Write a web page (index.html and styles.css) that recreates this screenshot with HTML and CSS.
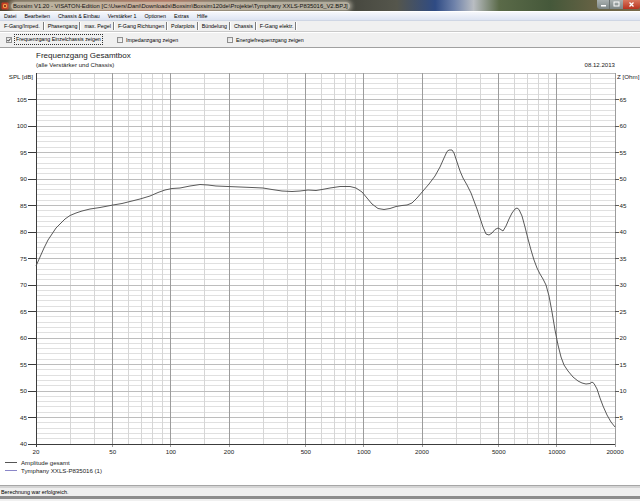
FILE: index.html
```html
<!DOCTYPE html>
<html lang="de">
<head>
<meta charset="utf-8">
<title>Boxsim</title>
<link rel="stylesheet" href="styles.css">
</head>
<body>
<div class="window">
  <div class="titlebar">
    <svg class="appicon" width="8" height="8" viewBox="0 0 8 8"><rect x="0.5" y="0.5" width="7" height="7" rx="1" fill="#c23a22"/><circle cx="4" cy="4" r="2.2" fill="#f2a24a"/><circle cx="4" cy="4" r="1" fill="#6a1a10"/></svg>
    <span class="title">Boxsim V1.20 - VISATON-Edition [C:\Users\Dani\Downloads\Boxsim\Boxsim120de\Projekte\Tymphany XXLS-P835016_V2.BPJ]</span>
    <div class="winbtns">
      <span class="wb wb-min"><svg width="13" height="9" viewBox="0 0 13 9"><rect x="4" y="5" width="5" height="1.5" fill="#fff"/></svg></span>
      <span class="wb wb-max"><svg width="13" height="9" viewBox="0 0 13 9"><rect x="4" y="2" width="5" height="4" fill="none" stroke="#fff" stroke-width="1"/></svg></span>
      <span class="wb wb-close"><svg width="17" height="9" viewBox="0 0 17 9"><path d="M6.5 2.5L10.5 6.5M10.5 2.5L6.5 6.5" stroke="#fff" stroke-width="1.3"/></svg></span>
    </div>
  </div>
  <div class="menubar">
    <span>Datei</span><span>Bearbeiten</span><span>Chassis &amp; Einbau</span><span>Verstärker 1</span><span>Optionen</span><span>Extras</span><span>Hilfe</span>
  </div>
  <div class="tabs">
    <span class="tab active">F-Gang/Imped.</span><span class="tab">Phasengang</span><span class="tab">max. Pegel</span><span class="tab">F-Gang Richtungen</span><span class="tab">Polarplots</span><span class="tab">Bündelung</span><span class="tab">Chassis</span><span class="tab">F-Gang elektr.</span>
  </div>
  <div class="checks">
    <label class="check c1"><span class="cb"><svg width="4" height="4" viewBox="0 0 4 4"><path d="M0.4 2L1.5 3.2L3.6 0.6" fill="none" stroke="#1a1a1a" stroke-width="0.9"/></svg></span><span class="focus">Frequenzgang Einzelchassis zeigen</span></label>
    <label class="check c2"><span class="cb"></span><span>Impedanzgang zeigen</span></label>
    <label class="check c3"><span class="cb"></span><span>Energiefrequenzgang zeigen</span></label>
  </div>
  <div class="chart">
    <div class="chart-head">
      <div class="chart-title">Frequenzgang Gesamtbox</div>
      <div class="chart-sub"><span>(alle Verstärker und Chassis)</span><span>08.12.2013</span></div>
    </div>
    <svg class="plot" width="640" height="388" viewBox="0 72 640 388">
      <g shape-rendering="crispEdges" fill="none" stroke-width="1">
        <path stroke="#e0e0e0" d="M36 440.7H615M36 435.4H615M36 430.1H615M36 424.8H615M36 414.2H615M36 408.9H615M36 403.6H615M36 398.3H615M36 387.7H615M36 382.4H615M36 377.1H615M36 371.8H615M36 361.2H615M36 355.9H615M36 350.6H615M36 345.3H615M36 334.7H615M36 329.4H615M36 324.1H615M36 318.8H615M36 308.2H615M36 302.9H615M36 297.6H615M36 292.3H615M36 281.7H615M36 276.4H615M36 271.1H615M36 265.8H615M36 255.2H615M36 249.9H615M36 244.6H615M36 239.3H615M36 228.7H615M36 223.4H615M36 218.1H615M36 212.8H615M36 202.2H615M36 196.9H615M36 191.6H615M36 186.3H615M36 175.7H615M36 170.4H615M36 165.1H615M36 159.8H615M36 149.2H615M36 143.9H615M36 138.6H615M36 133.3H615M36 122.7H615M36 117.4H615M36 112.1H615M36 106.8H615M36 96.2H615M36 90.9H615M36 85.6H615M36 80.3H615"/>
        <path stroke="#d6d6d6" d="M70 75V446M94.1 75V446M128.1 75V446M141 75V446M152.2 75V446M162.1 75V446M204.9 75V446M263 75V446M287.1 75V446M321.1 75V446M334 75V446M345.2 75V446M355.1 75V446M397.9 75V446M456 75V446M480.1 75V446M514.1 75V446M527 75V446M538.2 75V446M548.1 75V446M590.9 75V446"/>
        <path stroke="#bdbdbd" d="M36 419.5H615M36 393H615M36 366.5H615M36 340H615M36 313.5H615M36 287H615M36 260.5H615M36 234H615M36 207.5H615M36 181H615M36 154.5H615M36 128H615M36 101.5H615M36 75H615"/>
        <path stroke="#9c9c9c" d="M112.8 75V449M170.9 75V449M229 75V449M305.8 75V449M363.9 75V449M422 75V449M498.8 75V449M556.9 75V449M615 75V449"/>
        <path stroke="#3c3c3c" d="M36 75V449M36 446H615M28 419.5H36M28 393H36M28 366.5H36M28 340H36M28 313.5H36M28 287H36M28 260.5H36M28 234H36M28 207.5H36M28 181H36M28 154.5H36M28 128H36M28 101.5H36M28 446H36"/>
        <path stroke="#5a5a5a" d="M615 101.5H619M615 128H619M615 154.5H619M615 181H619M615 207.5H619M615 234H619M615 260.5H619M615 287H619M615 313.5H619M615 340H619M615 366.5H619M615 393H619M615 419.5H619"/>
      </g>
      <g class="ax-left" text-anchor="end">
        <text x="33" y="80.5">SPL [dB]</text>
        <text x="27" y="103.7">105</text>
        <text x="27" y="130.2">100</text>
        <text x="27" y="156.7">95</text>
        <text x="27" y="183.2">90</text>
        <text x="27" y="209.7">85</text>
        <text x="27" y="236.2">80</text>
        <text x="27" y="262.7">75</text>
        <text x="27" y="289.2">70</text>
        <text x="27" y="315.7">65</text>
        <text x="27" y="342.2">60</text>
        <text x="27" y="368.7">55</text>
        <text x="27" y="395.2">50</text>
        <text x="27" y="421.7">45</text>
        <text x="27" y="448.2">40</text>
      </g>
      <g class="ax-right">
        <text x="617" y="80.5">Z [Ohm]</text>
        <text x="619.5" y="103.7">65</text>
        <text x="619.5" y="130.2">60</text>
        <text x="619.5" y="156.7">55</text>
        <text x="619.5" y="183.2">50</text>
        <text x="619.5" y="209.7">45</text>
        <text x="619.5" y="236.2">40</text>
        <text x="619.5" y="262.7">35</text>
        <text x="619.5" y="289.2">30</text>
        <text x="619.5" y="315.7">25</text>
        <text x="619.5" y="342.2">20</text>
        <text x="619.5" y="368.7">15</text>
        <text x="619.5" y="395.2">10</text>
        <text x="619.5" y="421.7">5</text>
      </g>
      <g class="ax-bottom" text-anchor="middle">
        <text x="36" y="455.8">20</text>
        <text x="112.8" y="455.8">50</text>
        <text x="170.9" y="455.8">100</text>
        <text x="229" y="455.8">200</text>
        <text x="305.8" y="455.8">500</text>
        <text x="363.9" y="455.8">1000</text>
        <text x="422" y="455.8">2000</text>
        <text x="498.8" y="455.8">5000</text>
        <text x="556.9" y="455.8">10000</text>
        <text x="615" y="455.8">20000</text>
      </g>
      <polyline class="curve" points="36,268 40,259 44,250 48,242 52,236 56,230 60,226 65,221 70,217.5 76,215 82,213 90,211 100,209.5 113,207 122,205.5 130,203.5 140,201 150,198 158,194.5 165,192 172,190.5 180,190 190,188 200,186.5 208,187 216,188 228,188.5 240,189 252,189.5 263,190 272,191.5 282,193 292,193.5 300,193 308,192 316,192.5 322,191.5 330,190 340,188.5 350,188.5 356,190 362,194 367,200 372,206 378,210.5 384,211.5 390,210.5 396,208.5 402,207.5 407,207 412,205 417,200 423,193 429,186 435,178 440,169 444,160 447,153.5 449,152 452,152 454,155 457,164 460,173 463,180 467,187 471,195 474,203 477,211 480,220 483,229 486,236 489,237 492,235 495,231.5 498,230 500,231 503,233 506,228 509,221 512,215 515,211 517,210 519,211.5 522,218 525,229 528,241 531,252 534,262 537,270 540,276 543,281 546,287 549,298 552,314 555,332 558,347 561,359 564,367 568,373 573,379 578,383 582,385 586,386 590,385.5 592,384 594,385.5 597,391 600,400 603,408 607,417 611,424 615,429"/>
    </svg>
    <div class="legend">
      <div class="leg"><span class="leg-line l1"></span><span>Amplitude gesamt</span></div>
      <div class="leg"><span class="leg-line l2"></span><span>Tymphany XXLS-P835016 (1)</span></div>
    </div>
  </div>
  <div class="status">Berechnung war erfolgreich.</div>
</div>
</body>
</html>
```

FILE: styles.css
```css
* { box-sizing: border-box; margin: 0; padding: 0; }
html, body { width: 640px; height: 501px; overflow: hidden; background: #f0f0f0; }
body { font-family: "Liberation Sans", Arial, sans-serif; font-size: 5.3px; color: #000; }

.window { display: flex; flex-direction: column; height: 501px; }

/* title bar */
.titlebar {
  height: 11px; flex: none;
  display: flex; align-items: center;
  background: linear-gradient(90deg, #4f4432 0%, #6b5a40 12%, #8a4c36 20%, #9a4a36 26%, #5e5240 34%, #41423a 52%, #55564c 62%, #2f4b84 68%, #6f82aa 71%, #b9bdc2 74%, #5a6a48 78%, #45583a 86%, #666244 93%, #786a4c 100%);
}
.appicon { margin-left: 1px; flex: none; }
.title {
  margin-left: 2px; font-size: 5.9px; white-space: nowrap; color: #111;
  line-height: 8px; padding: 0 2px;
  background: rgba(222, 214, 196, 0.72);
  box-shadow: 0 0 4px 2px rgba(222, 214, 196, 0.6);
  border-radius: 4px;
}
.winbtns { margin-left: auto; align-self: flex-start; display: flex; height: 9px; }
.wb { display: block; height: 9px; }
.wb svg { display: block; }
.wb-min, .wb-max { width: 13px; background: linear-gradient(#a9b0b0, #7d8686); }
.wb-min { border-radius: 0 0 0 3px; border-right: 1px solid #6a7070; }
.wb-close { width: 17px; background: linear-gradient(#d8775e, #b8321f); border-radius: 0 0 3px 0; }

/* menu */
.menubar {
  height: 10px; flex: none;
  display: flex; align-items: center; gap: 8px;
  padding-left: 4px;
  border-top: 1px solid #fff;
  border-bottom: 1px solid #cfd6e4;
  background: linear-gradient(#f6f8fc, #dde4f2);
}

/* tabs */
.tabs { height: 10px; flex: none; display: flex; align-items: center; background: #f0f0f0; }
.tab {
  padding: 0 2px 0 4px; line-height: 8px;
  border-right: 1px solid #7c7c7c;
  box-shadow: 1px 0 0 #fff;
}
.tab.active { padding-right: 3px; }

/* checkbox row */
.checks {
  height: 17px; flex: none;
  display: flex; align-items: center;
  padding-left: 6px;
  border-top: 1px solid #c9c9c9;
  box-shadow: inset 0 1px 0 #fff;
  border-bottom: 1px solid #a0a0a0;
  background: #f0f0f0;
}
.check { display: flex; align-items: center; gap: 3px; }
.c1 { width: 111px; }
.c2 { width: 110px; }
.cb {
  width: 6px; height: 6px; flex: none;
  border: 1px solid #8f8f8f;
  background: linear-gradient(135deg, #dedede, #fafafa);
  display: flex; align-items: center; justify-content: center;
}
.cb svg { display: block; }
.focus { outline: 1px dotted #333; padding: 1px; line-height: 7px; }

/* chart */
.chart { height: 437px; flex: none; background: #fff; display: flex; flex-direction: column; }
.chart-head { height: 22px; flex: none; padding: 3px 25px 0 36px; }
.chart-title { font-size: 8px; line-height: 10px; color: #222; }
.chart-sub { display: flex; justify-content: space-between; font-size: 6.1px; line-height: 8px; color: #222; }
.plot { display: block; flex: none; }
.plot text { font-family: "Liberation Sans", Arial, sans-serif; font-size: 6.2px; fill: #222; }
.curve { fill: none; stroke: #505050; stroke-width: 0.95; stroke-linejoin: round; }

.legend { flex: none; height: 27px; padding-left: 5px; font-size: 6.1px; color: #222; }
.leg { display: flex; align-items: center; gap: 4px; height: 8.5px; }
.leg-line { width: 12px; height: 1px; }
.l1 { background: #555; }
.l2 { background: #8a86c8; }

/* status */
.status {
  height: 14px; flex: none;
  border-top: 1px solid #a6a6a6;
  box-shadow: inset 0 2px 0 #d4d4d4;
  border-bottom: 3px solid #8c8c8c;
  background: #eeeeee;
  padding: 2px 0 0 1px;
  line-height: 8px;
  font-size: 5.4px;
}
```
